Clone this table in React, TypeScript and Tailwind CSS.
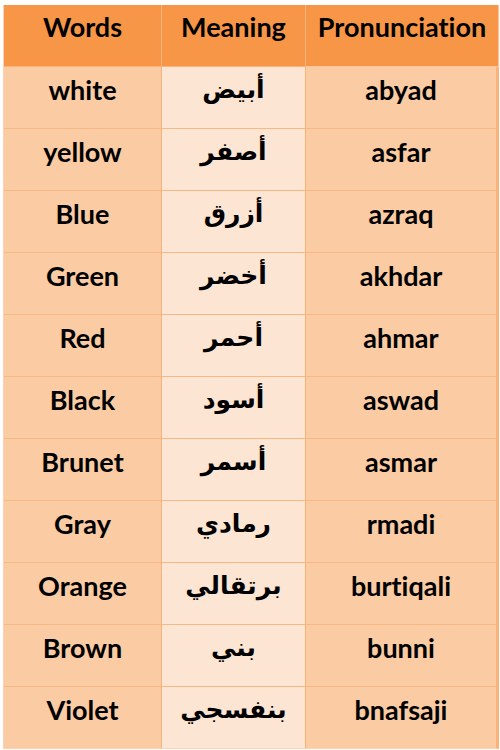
import React from "react";

const rows: [string, string, string][] = [
  ["white", "أبيض", "abyad"],
  ["yellow", "أصفر", "asfar"],
  ["Blue", "أزرق", "azraq"],
  ["Green", "أخضر", "akhdar"],
  ["Red", "أحمر", "ahmar"],
  ["Black", "أسود", "aswad"],
  ["Brunet", "أسمر", "asmar"],
  ["Gray", "رمادي", "rmadi"],
  ["Orange", "برتقالي", "burtiqali"],
  ["Brown", "بني", "bunni"],
  ["Violet", "بنفسجي", "bnafsaji"],
];

const latin =
  "font-['Lato','Liberation_Sans',sans-serif] [font-variant-ligatures:none] text-[27px] font-bold text-black";
const arabic =
  "font-['DejaVu_Sans','Liberation_Sans',sans-serif] text-[25px] font-bold text-black";

export default function App() {
  return (
    <div className="w-[500px] h-[750px] bg-white pt-[5px] pl-[3px]">
      <div className="w-[495px] grid grid-cols-[158px_144px_193px] border-l border-[#fbd3b3]">
        <div className={`h-[62px] bg-[#f79646] flex items-center justify-center pb-[17px] border-b border-r border-[#fbb27a] ${latin}`}>
          Words
        </div>
        <div className={`h-[62px] bg-[#f79646] flex items-center justify-center pb-[17px] border-b border-r border-[#fbb27a] ${latin}`}>
          Meaning
        </div>
        <div className={`h-[62px] bg-[#f79646] flex items-center justify-center pb-[17px] border-b border-r border-[#fbc49a] ${latin}`}>
          Pronunciation
        </div>
        {rows.map(([w, m, p], ri) => {
          const last = ri === rows.length - 1;
          return (
            <React.Fragment key={w}>
              <div
                className={`h-[62px] bg-[#fbcba3] flex items-center justify-center pb-[15px] border-r border-[#f9b27a] border-b ${last ? "border-b-[#fbd3b3]" : "border-b-[#f9b783]"} ${latin}`}
              >
                {w}
              </div>
              <div
                dir="rtl"
                className={`h-[62px] bg-[#fde5d3] flex items-center justify-center pb-[15px] border-r border-[#f9b27a] border-b ${last ? "border-b-[#fbd3b3]" : "border-b-[#f9b783]"} ${arabic}`}
              >
                {m}
              </div>
              <div
                className={`h-[62px] bg-[#fbcba3] flex items-center justify-center pb-[15px] border-r-[3px] border-[#f9b27a] border-b ${last ? "border-b-[#fbd3b3]" : "border-b-[#f9b783]"} ${latin}`}
              >
                {p}
              </div>
            </React.Fragment>
          );
        })}
      </div>
    </div>
  );
}
